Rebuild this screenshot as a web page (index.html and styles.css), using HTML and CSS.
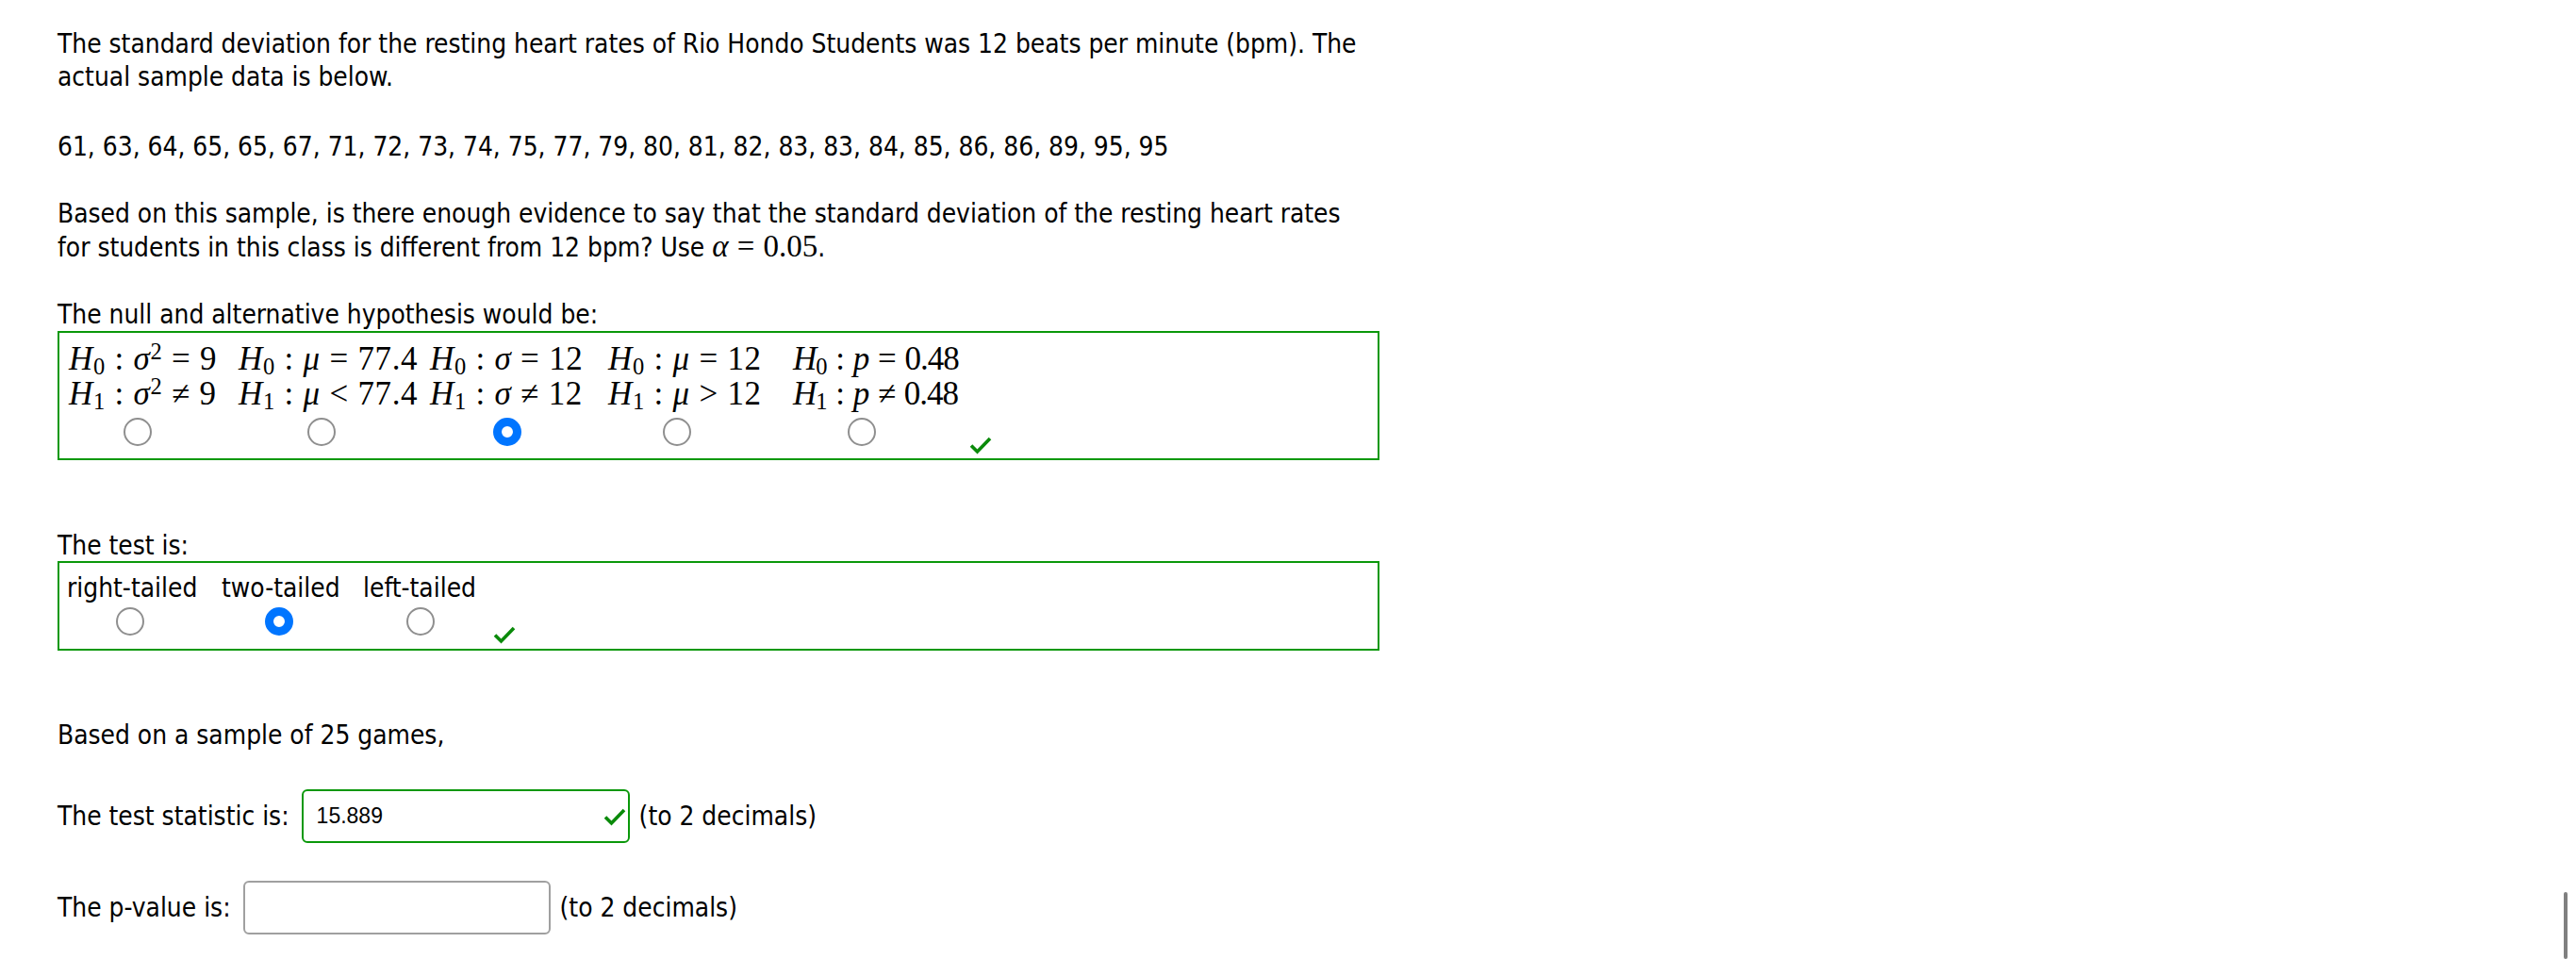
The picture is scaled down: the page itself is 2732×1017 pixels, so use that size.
FILE: index.html
```html
<!DOCTYPE html>
<html>
<head>
<meta charset="utf-8">
<link rel="stylesheet" href="styles.css">
</head>
<body>
<div class="page">
  <p class="para intro">The standard deviation for the resting heart rates of Rio Hondo Students was 12 beats per minute (bpm). The<br>actual sample data is below.</p>
  <p class="para">61, 63, 64, 65, 65, 67, 71, 72, 73, 74, 75, 77, 79, 80, 81, 82, 83, 83, 84, 85, 86, 86, 89, 95, 95</p>
  <p class="para">Based on this sample, is there enough evidence to say that the standard deviation of the resting heart rates<br>for students in this class is different from 12 bpm? Use <span class="inline-math"><i>α</i><span class="rel">=</span>0.05</span>.</p>
  <p class="para label">The null and alternative hypothesis would be:</p>
  <div class="box">
    <div class="choices hyp">
      <label class="choice">
        <span class="math"><span class="mrow"><i>H</i><sub>0</sub><span class="rel">:</span><i>σ</i><sup>2</sup><span class="rel">=</span>9</span><span class="mrow"><i>H</i><sub>1</sub><span class="rel">:</span><i>σ</i><sup>2</sup><span class="rel">≠</span>9</span></span>
        <input type="radio" name="h" class="radio">
      </label>
      <label class="choice">
        <span class="math"><span class="mrow"><i>H</i><sub>0</sub><span class="rel">:</span><i>μ</i><span class="rel">=</span>77.4</span><span class="mrow"><i>H</i><sub>1</sub><span class="rel">:</span><i>μ</i><span class="rel">&lt;</span>77.4</span></span>
        <input type="radio" name="h" class="radio">
      </label>
      <label class="choice">
        <span class="math"><span class="mrow"><i>H</i><sub>0</sub><span class="rel">:</span><i>σ</i><span class="rel">=</span>12</span><span class="mrow"><i>H</i><sub>1</sub><span class="rel">:</span><i>σ</i><span class="rel">≠</span>12</span></span>
        <input type="radio" name="h" class="radio" checked>
      </label>
      <label class="choice">
        <span class="math"><span class="mrow"><i>H</i><sub>0</sub><span class="rel">:</span><i>μ</i><span class="rel">=</span>12</span><span class="mrow"><i>H</i><sub>1</sub><span class="rel">:</span><i>μ</i><span class="rel">&gt;</span>12</span></span>
        <input type="radio" name="h" class="radio">
      </label>
      <label class="choice">
        <span class="math"><span class="mrow"><i>H</i><sub>0</sub><span class="rel">:</span><i>p</i><span class="rel">=</span>0.48</span><span class="mrow"><i>H</i><sub>1</sub><span class="rel">:</span><i>p</i><span class="rel">≠</span>0.48</span></span>
        <input type="radio" name="h" class="radio">
      </label>
      <span class="check"><svg viewBox="0 0 24 20" width="24" height="20"><path d="M2 10.5 L8.5 17 L22 3" fill="none" stroke="#0a8a0a" stroke-width="3.6"/></svg></span>
    </div>
  </div>
  <p class="para label spaced test-label">The test is:</p>
  <div class="box box2">
    <div class="choices tails">
      <label class="choice"><span class="tail-text">right-tailed</span><input type="radio" name="t" class="radio"></label>
      <label class="choice"><span class="tail-text">two-tailed</span><input type="radio" name="t" class="radio" checked></label>
      <label class="choice"><span class="tail-text">left-tailed</span><input type="radio" name="t" class="radio"></label>
      <span class="check"><svg viewBox="0 0 24 20" width="24" height="20"><path d="M2 10.5 L8.5 17 L22 3" fill="none" stroke="#0a8a0a" stroke-width="3.6"/></svg></span>
    </div>
  </div>
  <p class="para spaced">Based on a sample of 25 games,</p>
  <div class="field-row">
    <span class="field-label">The test statistic is:</span>
    <span class="input correct"><span class="input-value">15.889</span><svg class="input-check" viewBox="0 0 24 20" width="24" height="20"><path d="M2 10.5 L8.5 17 L22 3" fill="none" stroke="#0a8a0a" stroke-width="3.6"/></svg></span>
    <span class="field-note">(to 2 decimals)</span>
  </div>
  <div class="field-row">
    <span class="field-label">The p-value is:</span>
    <span class="input empty"></span>
    <span class="field-note">(to 2 decimals)</span>
  </div>
</div>
<div class="scroll-thumb"></div>
</body>
</html>
```

FILE: styles.css
```css
html, body {
  margin: 0;
  padding: 0;
  background: #fff;
}
body {
  font-family: "DejaVu Sans Condensed", "DejaVu Sans", sans-serif;
  font-size: 27.85px;
  line-height: 35px;
  color: #000;
}
.page {
  padding: 29px 0 0 61px;
  width: 1402px;
}
.para {
  margin: 0 0 36px 0;
  white-space: nowrap;
}
.para.intro {
  margin-bottom: 39px;
}
.para.label {
  margin-bottom: 0;
}
.para.spaced {
  margin-top: 72px;
}
.para.test-label {
  margin-top: 75px;
  line-height: 32px;
}
.inline-math {
  font-family: "Liberation Serif", serif;
  font-size: 33px;
}
.rel {
  padding: 0 0.2778em;
  font-style: normal;
}
.box {
  border: 2px solid #0a980a;
  padding: 9px 0 14px 0;
  box-sizing: border-box;
  height: 137px;
}
.box2 {
  height: 95px;
}
.choices {
  display: flex;
  align-items: flex-end;
}
.choice {
  display: flex;
  flex-direction: column;
  align-items: flex-start;
}
.hyp { padding-left: 10px; }
.hyp .choice:nth-child(1) { width: 180px; }
.hyp .choice:nth-child(2) { width: 203px; }
.hyp .choice:nth-child(3) { width: 189px; }
.hyp .choice:nth-child(4) { width: 196px; }
.hyp .choice:nth-child(5) { width: 187px; }
.hyp .choice:nth-child(1) .radio { margin-left: 58px; }
.hyp .choice:nth-child(2) .radio { margin-left: 73px; }
.hyp .choice:nth-child(3) .radio { margin-left: 67px; }
.hyp .choice:nth-child(4) .radio { margin-left: 58px; }
.hyp .choice:nth-child(5) .radio { margin-left: 58px; }
.hyp .choice:nth-child(5) .math { letter-spacing: -1px; }
.tails { padding-left: 8px; }
.tails .choice:nth-child(1) { width: 164px; }
.tails .choice:nth-child(2) { width: 150px; }
.tails .choice:nth-child(3) { width: 138px; }
.tails .choice:nth-child(1) .radio { margin-left: 52px; }
.tails .choice:nth-child(2) .radio { margin-left: 46px; }
.tails .choice:nth-child(3) .radio { margin-left: 46px; }
.math {
  display: flex;
  flex-direction: column;
  font-family: "Liberation Serif", serif;
  font-size: 35px;
  line-height: 37px;
  letter-spacing: 0.6px;
  white-space: nowrap;
}
.math i {
  font-style: italic;
}
.math sub, .math sup {
  font-size: 0.7em;
  line-height: 0;
  font-style: normal;
}
.math sub { vertical-align: -0.22em; }
.math sup { vertical-align: 0.45em; }
.radio {
  -webkit-appearance: none;
  appearance: none;
  width: 30px;
  height: 30px;
  margin: 7px 0 0 0;
  border: 2.5px solid #8f8f8f;
  border-radius: 50%;
  box-sizing: border-box;
  background: #fff;
}
.radio:checked {
  border: 9px solid #0075ff;
}
.tails .radio {
  margin-top: 3px;
}
.check {
  display: flex;
  margin-bottom: -9px;
}
.field-row {
  display: flex;
  align-items: center;
  margin-top: 40px;
}
.field-label {
  margin-right: 13px;
}
.input {
  display: flex;
  align-items: center;
  box-sizing: border-box;
  height: 57px;
  border-radius: 6px;
  margin-right: 10px;
}
.input.correct {
  width: 348px;
  border: 2px solid #0a980a;
  padding: 0 2px 0 14px;
  justify-content: space-between;
}
.input.empty {
  width: 326px;
  border: 2px solid #a0a0a0;
}
.input-value {
  font-family: "Liberation Sans", Arial, sans-serif;
  font-size: 23px;
}
.scroll-thumb {
  position: fixed;
  right: 9px;
  top: 946px;
  width: 4px;
  height: 71px;
  background: #808080;
  border-radius: 2px;
}
```
